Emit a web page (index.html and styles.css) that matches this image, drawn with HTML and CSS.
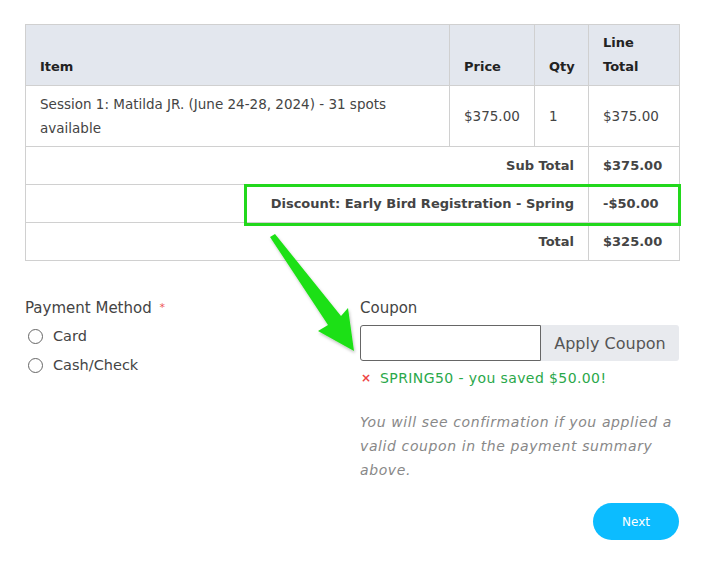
FILE: index.html
```html
<!DOCTYPE html>
<html>
<head>
<meta charset="utf-8">
<link rel="stylesheet" href="styles.css">
</head>
<body>
<div class="page">
  <table class="summary">
    <colgroup>
      <col class="c-item"><col class="c-price"><col class="c-qty"><col class="c-total">
    </colgroup>
    <thead>
      <tr><th>Item</th><th>Price</th><th>Qty</th><th>Line Total</th></tr>
    </thead>
    <tbody>
      <tr class="line"><td>Session 1: Matilda JR. (June 24-28, 2024) - 31 spots available</td><td>$375.00</td><td>1</td><td>$375.00</td></tr>
      <tr class="sum"><td colspan="3">Sub Total</td><td>$375.00</td></tr>
      <tr class="sum"><td colspan="3">Discount: Early Bird Registration - Spring</td><td>-$50.00</td></tr>
      <tr class="sum"><td colspan="3">Total</td><td>$325.00</td></tr>
    </tbody>
  </table>

  <div class="form">
    <div class="col">
      <div class="label">Payment Method <span class="req">*</span></div>
      <div class="radios">
        <label class="radio"><span class="dot"></span>Card</label>
        <label class="radio"><span class="dot"></span>Cash/Check</label>
      </div>
    </div>
    <div class="col">
      <div class="label">Coupon</div>
      <div class="coupon">
        <span class="input"></span>
        <span class="apply">Apply Coupon</span>
      </div>
      <div class="msg"><span class="x">×</span>SPRING50 - you saved $50.00!</div>
      <p class="note">You will see confirmation if you applied a valid coupon in the payment summary above.</p>
      <div class="actions"><span class="next">Next</span></div>
    </div>
  </div>

  <div class="highlight"></div>
  <svg class="arrow" width="705" height="561" viewBox="0 0 705 561">
    <defs>
      <filter id="sh" x="-20%" y="-20%" width="140%" height="140%">
        <feDropShadow dx="1" dy="2" stdDeviation="1.5" flood-color="#000" flood-opacity="0.25"/>
      </filter>
    </defs>
    <polygon filter="url(#sh)" fill="#1fe015" points="270,237 275,234 341,316 348,308 354,351 318,331 328,325"/>
  </svg>
</div>
</body>
</html>
```
FILE: styles.css
```css
* { box-sizing: border-box; }
html, body { margin: 0; padding: 0; background: #fff; }
body {
  font-family: "DejaVu Sans", "Open Sans", sans-serif;
  color: #444;
  font-size: 13.5px;
}
.page {
  position: relative;
  width: 705px;
  height: 561px;
  padding: 24px 26px 0 25px;
}
.summary {
  width: 654px;
  border-collapse: collapse;
  table-layout: fixed;
}
.c-item { width: 424px; }
.c-price { width: 85px; }
.c-qty { width: 54px; }
.c-total { width: 91px; }
.summary th, .summary td {
  border: 1px solid #d0d0d0;
  padding: 7px 14px 6px;
  line-height: 24px;
  text-align: left;
}
.summary th {
  background: #e3e7ee;
  color: #222;
  font-weight: bold;
  font-size: 13px;
  vertical-align: bottom;
  padding-top: 6px;
  padding-bottom: 6px;
}
.summary td { vertical-align: middle; }
.summary tr.line td { padding-top: 6px; padding-bottom: 6px; }
.summary tr.sum td { font-weight: bold; color: #444; font-size: 13px; }
.summary tr.sum td:first-child { text-align: right; }
.form {
  display: grid;
  grid-template-columns: 335px 1fr;
  margin-top: 37px;
}
.label {
  font-size: 15px;
  color: #444;
  line-height: 20px;
}
.req { color: #e55; font-size: 11px; vertical-align: top; margin-left: 3px; }
.radios { margin-top: 8px; display: flex; flex-direction: column; gap: 9px; }
.radio {
  display: flex;
  align-items: center;
  font-size: 14.5px;
  line-height: 20px;
  color: #444;
}
.dot {
  width: 15px; height: 15px;
  border: 1px solid #666;
  border-radius: 50%;
  margin: 0 10px 0 3px;
}
.coupon {
  display: flex;
  margin-top: 7px;
  height: 36px;
}
.input {
  width: 181px;
  border: 1px solid #666;
  border-radius: 3px 0 0 3px;
  background: #fff;
}
.apply {
  flex: 1;
  background: #e8eaee;
  color: #555;
  font-size: 16px;
  display: flex;
  align-items: center;
  justify-content: center;
  border-radius: 0 3px 3px 0;
}
.msg {
  margin-top: 8px;
  color: #2aa84a;
  font-size: 14px;
  letter-spacing: 0.4px;
  line-height: 18px;
  display: flex;
  align-items: center;
}
.x { color: #e44; font-size: 12px; margin: 0 9px 0 1px; font-weight: bold; letter-spacing: 0; }
.note {
  margin: 23px 0 0;
  font-style: italic;
  color: #888;
  font-size: 14px;
  letter-spacing: 0.6px;
  line-height: 24px;
}
.actions { display: flex; justify-content: flex-end; margin-top: 21px; }
.next {
  width: 86px; height: 37px;
  border-radius: 19px;
  background: #0cbcff;
  color: #fff;
  font-size: 12px;
  display: flex;
  align-items: center;
  justify-content: center;
}
.highlight {
  position: absolute;
  left: 244px; top: 184px;
  width: 437px; height: 42px;
  border: 3px solid #22d81c;
}
.arrow { position: absolute; left: 0; top: 0; pointer-events: none; }
```
